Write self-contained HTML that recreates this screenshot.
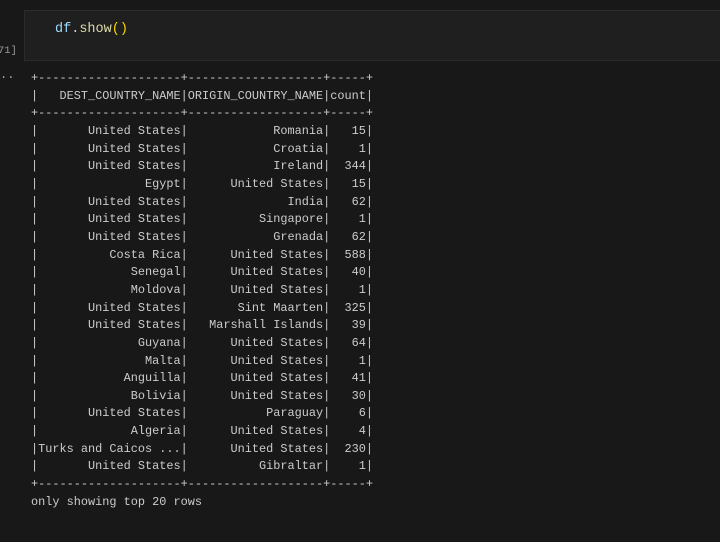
<!DOCTYPE html>
<html><head><style>
body{margin:0;width:720px;height:542px;background:#181818;overflow:hidden;position:relative;font-family:"Liberation Mono",monospace;color:#cccccc}
.cell{position:absolute;left:24px;top:10px;width:700px;height:51px;background:#1f1f1f;border:1px solid #2b2b2b;box-sizing:border-box}
.code{position:absolute;left:55px;top:22px;font-size:13.5px;color:#d4d4d4}
.num{position:absolute;left:-2px;top:45px;font-size:10.5px;color:#999}
.dots{position:absolute;left:0;top:68px;font-size:12px;color:#aaa}
pre{position:absolute;left:31px;top:70px;margin:0;font-family:"Liberation Mono",monospace;font-size:11.88px;line-height:17.65px;color:#cccccc}
</style></head><body>
<div class="cell"></div>
<div class="code"><span style="color:#9cdcfe">df</span>.<span style="color:#dcdcaa">show</span><span style="color:#ffd700">()</span></div>
<div class="num">71]</div>
<div class="dots">..</div>
<pre>+--------------------+-------------------+-----+
|   DEST_COUNTRY_NAME|ORIGIN_COUNTRY_NAME|count|
+--------------------+-------------------+-----+
|       United States|            Romania|   15|
|       United States|            Croatia|    1|
|       United States|            Ireland|  344|
|               Egypt|      United States|   15|
|       United States|              India|   62|
|       United States|          Singapore|    1|
|       United States|            Grenada|   62|
|          Costa Rica|      United States|  588|
|             Senegal|      United States|   40|
|             Moldova|      United States|    1|
|       United States|       Sint Maarten|  325|
|       United States|   Marshall Islands|   39|
|              Guyana|      United States|   64|
|               Malta|      United States|    1|
|            Anguilla|      United States|   41|
|             Bolivia|      United States|   30|
|       United States|           Paraguay|    6|
|             Algeria|      United States|    4|
|Turks and Caicos ...|      United States|  230|
|       United States|          Gibraltar|    1|
+--------------------+-------------------+-----+
only showing top 20 rows</pre>
</body></html>
